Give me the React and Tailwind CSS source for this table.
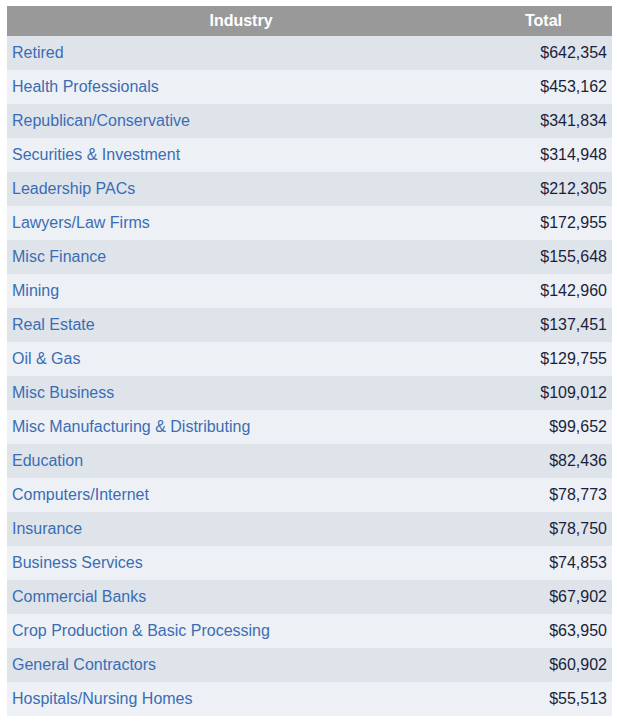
import React from "react";

const rows = [
  ["Retired", "$642,354"],
  ["Health Professionals", "$453,162"],
  ["Republican/Conservative", "$341,834"],
  ["Securities & Investment", "$314,948"],
  ["Leadership PACs", "$212,305"],
  ["Lawyers/Law Firms", "$172,955"],
  ["Misc Finance", "$155,648"],
  ["Mining", "$142,960"],
  ["Real Estate", "$137,451"],
  ["Oil & Gas", "$129,755"],
  ["Misc Business", "$109,012"],
  ["Misc Manufacturing & Distributing", "$99,652"],
  ["Education", "$82,436"],
  ["Computers/Internet", "$78,773"],
  ["Insurance", "$78,750"],
  ["Business Services", "$74,853"],
  ["Commercial Banks", "$67,902"],
  ["Crop Production & Basic Processing", "$63,950"],
  ["General Contractors", "$60,902"],
  ["Hospitals/Nursing Homes", "$55,513"],
];

function App() {
  return (
    <div className="bg-white min-h-screen pt-[6px] pl-[7px] font-['Liberation_Sans',Arial,sans-serif]">
      <table className="w-[605px] border-collapse text-[16px]">
        <thead>
          <tr className="bg-[#999999] h-[30px] text-white font-bold">
            <th className="w-[468px] text-center p-0">Industry</th>
            <th className="text-center p-0">Total</th>
          </tr>
        </thead>
        <tbody>
          {rows.map(([name, total], i) => (
            <tr
              key={name}
              className={`h-[34px] ${i % 2 === 0 ? "bg-[#dfe4eb]" : "bg-[#edf1f5]"}`}
            >
              <td className="pl-[5px] py-0 text-[#3a6db4]">{name}</td>
              <td className="pr-[5px] py-0 text-right text-[#1b1f3b]">{total}</td>
            </tr>
          ))}
        </tbody>
      </table>
    </div>
  );
}

export default App;
